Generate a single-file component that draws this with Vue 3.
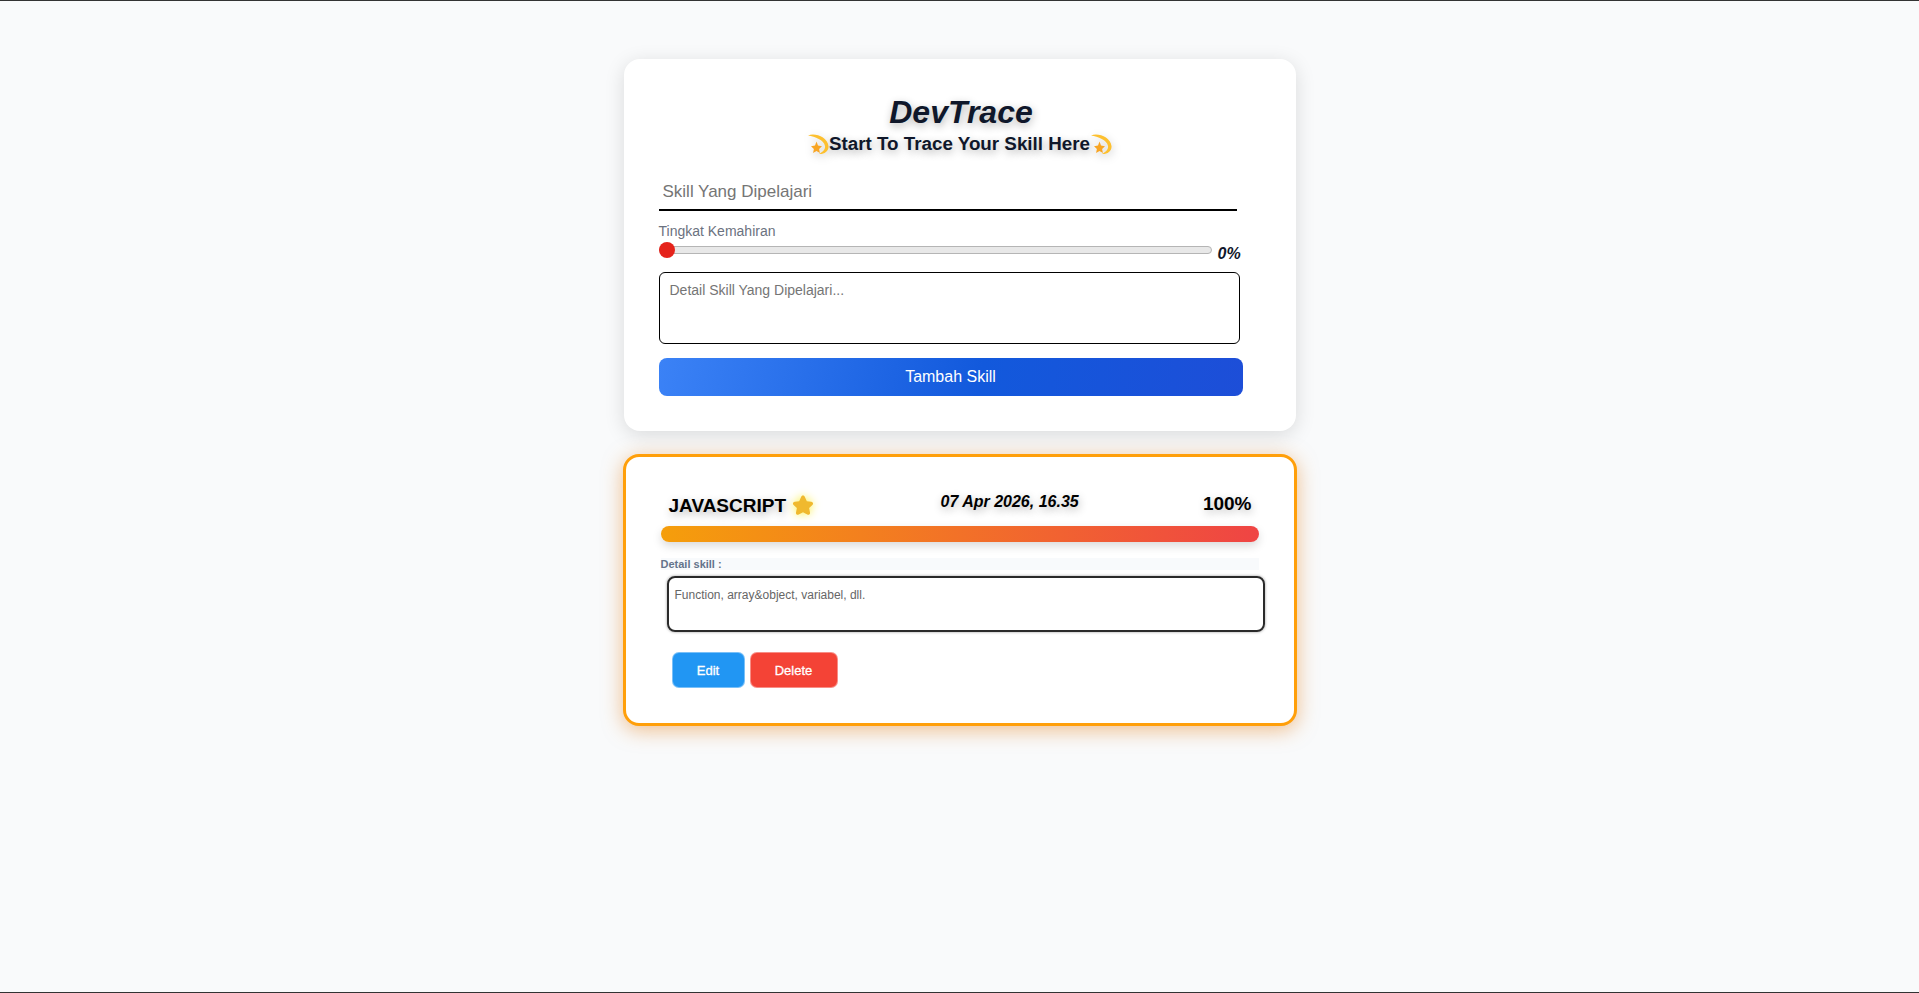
<template>
    <div class="page">
        <!-- Form -->
        <form class="card form-card" @submit.prevent>
            <h1 class="title">DevTrace</h1>
            <h2 class="subtitle">
                <svg class="dizzy" viewBox="0 0 22 22">
                    <path d="M1 2.5 C8 -0.5 20.5 4 21.5 13 C22 18 17 21.5 12 21 C15.5 19.5 18.6 16.5 18 13 C17 7 8 3.5 1 2.5 Z" fill="#fdc02f" />
                    <path d="M9.5 8.5 L11 12.6 L15 13.2 L12.1 15.9 L12.9 20 L9.5 18 L6.1 20 L6.9 15.9 L4 13.2 L8 12.6 Z" fill="#f8a523" />
                </svg>
                <span>Start To Trace Your Skill Here</span>
                <svg class="dizzy" viewBox="0 0 22 22">
                    <path d="M1 2.5 C8 -0.5 20.5 4 21.5 13 C22 18 17 21.5 12 21 C15.5 19.5 18.6 16.5 18 13 C17 7 8 3.5 1 2.5 Z" fill="#fdc02f" />
                    <path d="M9.5 8.5 L11 12.6 L15 13.2 L12.1 15.9 L12.9 20 L9.5 18 L6.1 20 L6.9 15.9 L4 13.2 L8 12.6 Z" fill="#f8a523" />
                </svg>
            </h2>
            <input v-model="skill" class="skill-input" type="text" placeholder="Skill Yang Dipelajari" />
            <label class="level-label">Tingkat Kemahiran</label>
            <div class="level-row">
                <input v-model.number="level" class="level-range" type="range" min="0" max="100" />
                <span class="level-value">{{ level }}%</span>
            </div>
            <textarea v-model="detail" class="detail-input" placeholder="Detail Skill Yang Dipelajari..."></textarea>
            <button type="submit" class="add-btn">Tambah Skill</button>
        </form>

        <!-- Skill list -->
        <div v-for="item in skills" :key="item.name" class="card skill-card">
            <div class="skill-head">
                <span class="skill-name">
                    {{ item.name }}
                    <svg class="star" viewBox="0 0 24 24">
                        <path d="M12 2.5 C13 2.5 13.6 3.2 14 4.2 L15.8 8.2 L20.2 8.8 C22.2 9.1 22.6 10.8 21.4 12 L18.1 15.1 L19 19.6 C19.3 21.4 17.7 22.3 16.3 21.5 L12 19.2 L7.7 21.5 C6.3 22.3 4.7 21.4 5 19.6 L5.9 15.1 L2.6 12 C1.4 10.8 1.8 9.1 3.8 8.8 L8.2 8.2 L10 4.2 C10.4 3.2 11 2.5 12 2.5 Z" fill="#f0b92e" />
                    </svg>
                </span>
                <span class="skill-date">{{ item.date }}</span>
                <span class="skill-level">{{ item.level }}%</span>
            </div>
            <div class="bar"></div>
            <p class="detail-label">Detail skill :</p>
            <div class="detail-box">{{ item.detail }}</div>
            <div class="actions">
                <button class="btn-edit">Edit</button>
                <button class="btn-delete">Delete</button>
            </div>
        </div>
    </div>
</template>

<script setup>
    import { ref } from 'vue'

    const skill = ref('')
    const level = ref(0)
    const detail = ref('')

    const skills = ref([
        {
            name: 'JAVASCRIPT',
            date: '07 Apr 2026, 16.35',
            level: 100,
            detail: 'Function, array&object, variabel, dll.'
        }
    ])
</script>

<style>
    body {
    background: #f9fafb;
    }
</style>

<style scoped>
    .page {
    box-sizing: border-box;
    height: 993px;
    padding-top: 58px;
    display: flex;
    flex-direction: column;
    align-items: center;
    gap: 23px;
    background: #f9fafb;
    border-top: 1px solid #333;
    border-bottom: 1px solid #333;
    font-family: "Liberation Sans", Arial, sans-serif;
    overflow: hidden;
    }

    .card {
    box-sizing: border-box;
    width: 672px;
    background: #fff;
    border-radius: 16px;
    }

    .form-card {
    height: 372px;
    padding: 35px;
    box-shadow: 0 4px 20px rgba(0, 0, 0, 0.13);
    display: flex;
    flex-direction: column;
    align-items: flex-start;
    }

    .title {
    align-self: stretch;
    margin: 0;
    padding-left: 3px;
    text-align: center;
    font-size: 32px;
    line-height: 36px;
    font-weight: 700;
    font-style: italic;
    color: #0f172a;
    text-shadow: 1px 3px 8px rgba(0, 0, 0, 0.3);
    }

    .subtitle {
    align-self: stretch;
    margin: 0;
    display: flex;
    justify-content: center;
    align-items: center;
    font-size: 18.8px;
    line-height: 28px;
    font-weight: 700;
    color: #0f172a;
    text-shadow: 1px 3px 8px rgba(0, 0, 0, 0.3);
    }

    .dizzy {
    width: 22px;
    height: 22px;
    filter: drop-shadow(1px 3px 4px rgba(0, 0, 0, 0.2));
    }

    .skill-input {
    box-sizing: border-box;
    width: 578px;
    height: 50px;
    margin-top: 3px;
    padding: 14px 4px 0;
    border: none;
    border-bottom: 2px solid #000;
    background: transparent;
    outline: none;
    font-family: inherit;
    font-size: 17px;
    }

    .level-label {
    margin-top: 11px;
    font-size: 14px;
    line-height: 19px;
    color: #6b7280;
    }

    .level-row {
    display: flex;
    align-items: center;
    width: 100%;
    height: 18px;
    }

    .level-range {
    -webkit-appearance: none;
    appearance: none;
    width: 553px;
    height: 8px;
    margin: 0;
    background: #e8e8e8;
    border: 1px solid #b5b5b5;
    border-radius: 4px;
    box-sizing: border-box;
    }

    .level-range::-webkit-slider-thumb {
    -webkit-appearance: none;
    width: 16px;
    height: 16px;
    margin-left: -1px;
    border-radius: 50%;
    background: #e5231b;
    }

    .level-value {
    margin: 8px 0 0 6px;
    font-size: 16px;
    font-weight: 700;
    font-style: italic;
    color: #0f172a;
    }

    .detail-input {
    box-sizing: border-box;
    width: 581px;
    height: 72px;
    margin-top: 13px;
    padding: 9px 10px;
    border: 1px solid #000;
    border-radius: 6px;
    outline: none;
    resize: none;
    font-family: inherit;
    font-size: 14px;
    }

    .add-btn {
    width: 584px;
    height: 38px;
    margin-top: 14px;
    border: none;
    border-radius: 8px;
    background: linear-gradient(100deg, #3b82f6, #1259dc 55%, #1d4ed8);
    color: #fff;
    font-family: inherit;
    font-size: 16px;
    }

    .skill-card {
    width: 674px;
    height: 272px;
    padding: 35px 35px 0;
    border: 3px solid #ff9f0a;
    box-shadow: 0 4px 20px rgba(230, 130, 30, 0.5);
    }

    .skill-head {
    display: flex;
    align-items: flex-start;
    height: 32px;
    padding: 0 7px 0 8px;
    }

    .skill-name {
    display: flex;
    align-items: center;
    gap: 5px;
    width: 272px;
    margin-top: 3px;
    font-size: 19px;
    font-weight: 700;
    color: #000;
    text-shadow: 1px 3px 8px rgba(0, 0, 0, 0.3);
    }

    .star {
    width: 24px;
    height: 24px;
    margin-top: -2px;
    filter: drop-shadow(0 0 5px #fbf04a);
    }

    .skill-date {
    font-size: 16px;
    line-height: 20px;
    font-weight: 700;
    font-style: italic;
    color: #000;
    text-shadow: 1px 3px 8px rgba(0, 0, 0, 0.3);
    }

    .skill-level {
    margin-left: auto;
    font-size: 19px;
    line-height: 24px;
    font-weight: 700;
    color: #000;
    text-shadow: 1px 3px 8px rgba(0, 0, 0, 0.25);
    }

    .bar {
    height: 16px;
    margin-top: 2px;
    border-radius: 8px;
    background: linear-gradient(90deg, #f59e0b, #ef4444);
    box-shadow: 0 4px 10px rgba(0, 0, 0, 0.15);
    }

    .detail-label {
    height: 12px;
    margin: 16px 0 0;
    background: #f8fafc;
    font-size: 11px;
    line-height: 12px;
    font-weight: 700;
    color: #64748b;
    }

    .detail-box {
    box-sizing: border-box;
    width: 598px;
    height: 56px;
    margin: 6px 0 0 6px;
    padding: 10px 6px;
    border: 2.5px solid #2a2a2a;
    border-radius: 8px;
    box-shadow: 0 0 3px rgba(0, 0, 0, 0.4);
    font-size: 12px;
    color: #666;
    }

    .actions {
    display: flex;
    gap: 5px;
    margin: 20px 0 0 11px;
    }

    .actions button {
    height: 36px;
    border: 1px solid rgba(255, 255, 255, 0.4);
    border-radius: 7px;
    color: #fff;
    font-family: inherit;
    font-size: 13px;
    -webkit-text-stroke: 0.3px #fff;
    }

    .btn-edit {
    width: 73px;
    background: #2196f3;
    }

    .btn-delete {
    width: 88px;
    background: #f44336;
    }
</style>
